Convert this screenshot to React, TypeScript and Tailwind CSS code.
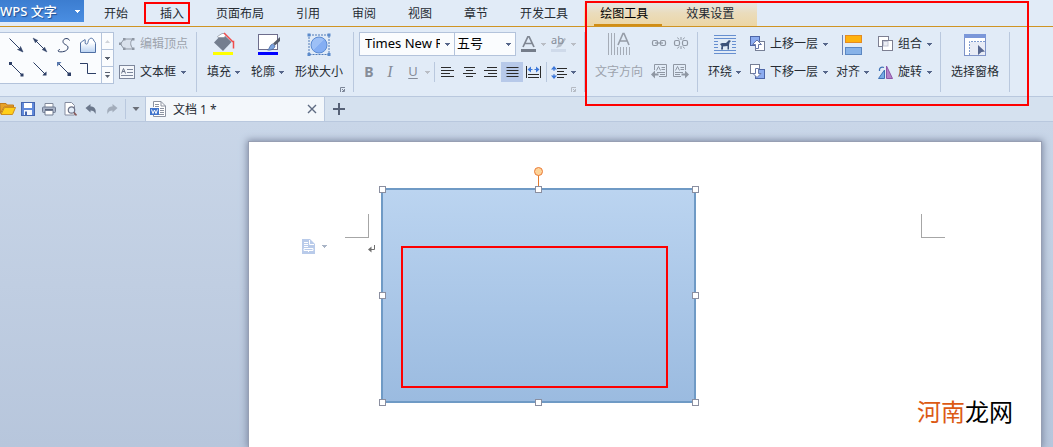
import React, { ReactNode } from "react";

function Caret({ className = "text-[#56668a]" }: { className?: string }) {
  return (
    <svg width="5" height="3" viewBox="0 0 5 3" shapeRendering="crispEdges" className={`shrink-0 ${className}`} aria-hidden="true">
      <path d="M0 0H5V1H0ZM1 1H4V2H1ZM2 2H3V3H2Z" fill="currentColor" />
    </svg>
  );
}

function Icon({ w = 16, h = 16, children }: { w?: number; h?: number; children: ReactNode }) {
  return (
    <svg width={w} height={h} viewBox={`0 0 ${w} ${h}`} fill="none" className="shrink-0" aria-hidden="true">
      {children}
    </svg>
  );
}

function BigButton({ icon, label, caret, disabled }: { icon: ReactNode; label: string; caret?: boolean; disabled?: boolean }) {
  return (
    <button
      type="button"
      disabled={disabled}
      className="flex shrink-0 flex-col items-center gap-1 whitespace-nowrap disabled:text-[#9da3ad]"
    >
      <span className="flex h-6 items-end">{icon}</span>
      <span className="flex h-6 items-center gap-1">
        {label}
        {caret && <Caret />}
      </span>
    </button>
  );
}

function RowButton({ icon, label, caret, disabled }: { icon: ReactNode; label: string; caret?: boolean; disabled?: boolean }) {
  return (
    <button
      type="button"
      disabled={disabled}
      className="flex h-6 items-center gap-[5px] whitespace-nowrap disabled:text-[#9da3ad]"
    >
      {icon}
      {label}
      {caret && <Caret />}
    </button>
  );
}

function IconButton({ label, className = "w-4", disabled, children }: { label: string; className?: string; disabled?: boolean; children: ReactNode }) {
  return (
    <button type="button" aria-label={label} disabled={disabled} className={`flex shrink-0 items-center justify-center ${className}`}>
      {children}
    </button>
  );
}

function Launcher({ className }: { className: string }) {
  return (
    <button type="button" aria-label="更多选项" className={`absolute right-2 bottom-0 ${className}`}>
      <Icon w={5} h={5}>
        <path d="M0.500 5V0.500H5M2 2L4 4M4.500 2V4.500H2" stroke="currentColor" />
      </Icon>
    </button>
  );
}

function Group({ className = "", children }: { className?: string; children: ReactNode }) {
  return <div className={`relative flex h-15 shrink-0 items-start border-r border-[#b9c8de] ${className}`}>{children}</div>;
}

const navy = "#2d3f66";

const shapes: { label: string; art: ReactNode }[] = [
  {
    label: "箭头",
    art: (
      <>
        <path d="M1.500 1.500L13 13" stroke={navy} />
        <path d="M15 15L9.500 12.500L12 12L12.500 9.500Z" fill={navy} stroke={navy} strokeWidth="0.600" />
      </>
    ),
  },
  {
    label: "双箭头",
    art: (
      <>
        <path d="M3 3L13 13" stroke={navy} />
        <path d="M15 15L10 12.500L12 12L12.500 10ZM1 1L6 3.500L4 4L3.500 6Z" fill={navy} stroke={navy} strokeWidth="0.400" />
      </>
    ),
  },
  { label: "曲线", art: <path d="M13.500 3.500C12.500 0.500 7 1 7 4.500C7 8 12.500 7.500 12 11C11.500 14.500 5 15.500 2.500 14.500C1.500 13.500 3 12.500 4 12.500" stroke={navy} /> },
  {
    label: "任意多边形",
    art: (
      <>
        <defs>
          <linearGradient id="freeform" x1="0" y1="0" x2="0" y2="1">
            <stop offset="0.300" stopColor="#ffffff" />
            <stop offset="1" stopColor="#b9d2f2" />
          </linearGradient>
        </defs>
        <path
          d="M0.500 6C1.500 4 4 4 5 2.500C6 4 4 6.500 6 7C8.500 7.500 7.500 4.500 9 2.500C10.500 0.500 13 1 13.500 3C14 4.500 15.500 5 15.500 6.500V15.500H0.500Z"
          fill="url(#freeform)"
          stroke="#4f6fa3"
        />
      </>
    ),
  },
  {
    label: "肘形连接",
    art: (
      <>
        <path d="M3 3L14 14" stroke={navy} />
        <path d="M1 1H4V4H1ZM12.500 12.500H15.500V15.500H12.500Z" fill={navy} />
      </>
    ),
  },
  {
    label: "直线连接",
    art: (
      <>
        <path d="M1.500 1.500L13 13" stroke={navy} />
        <path d="M11.500 13L14.500 10.500V14.500H10.500Z" fill={navy} />
      </>
    ),
  },
  {
    label: "双向连接",
    art: (
      <>
        <path d="M3 3L13 13" stroke={navy} />
        <path d="M11.500 11.500H15V15H11.500Z" fill={navy} />
        <path d="M1 1H5.500L1 5.500Z" fill="#5878ae" />
      </>
    ),
  },
  { label: "折线", art: <path d="M0 2.500H7.500V12.500H16" stroke={navy} /> },
];

function ShapeGallery() {
  return (
    <div className="flex shrink-0 border-y border-r border-[#b3c3db] bg-[#fafcfe]">
      <div className="grid grid-cols-4 pr-px pb-0.5 pl-1">
        {shapes.map((s) => (
          <button key={s.label} type="button" aria-label={s.label} className="flex size-6 items-center justify-center">
            <Icon>{s.art}</Icon>
          </button>
        ))}
      </div>
      <div className="flex w-3 flex-col divide-y divide-[#b3c3db] border-l border-[#b3c3db]">
        <button type="button" aria-label="向上" className="flex flex-1 items-center justify-center">
          <Icon w={5} h={3}>
            <path d="M0 3H5L2.500 0Z" fill="#cfd3d9" />
          </Icon>
        </button>
        <button type="button" aria-label="向下" className="flex flex-1 items-center justify-center">
          <Caret className="text-[#5a6270]" />
        </button>
        <button type="button" aria-label="展开" className="flex flex-1 items-center justify-center">
          <Icon w={5} h={6}>
            <path d="M0 0H5V1H0ZM0 3H5L2.500 6Z" fill="#5a6270" />
          </Icon>
        </button>
      </div>
    </div>
  );
}

const gray = "#8f97a3";

const editPoints = (
  <Icon w={16} h={14}>
    <path d="M5 2H13.500C11 5 11 8 14 12H5L1.500 7Z" stroke={gray} fill="#d9e1ec" />
    <path d="M4 1H6.500V3.500H4ZM13 1H15.500V3.500H13ZM4 10.500H6.500V13H4ZM13 10.500H15.500V13H13ZM0 5.500H2.500V8H0Z" fill={gray} />
  </Icon>
);

const textBox = (
  <Icon w={16} h={14}>
    <rect x="0.500" y="0.500" width="15" height="13" fill="#f4f7fb" stroke="#7d879c" />
    <path d="M2.500 8.500L4.500 3.500L6.500 8.500M3 6.500H6" stroke="#6a7488" />
    <path d="M8 4.500H14M8 7.500H14M2 10.500H14" stroke="#7d879c" />
  </Icon>
);

const fillIcon = (
  <Icon w={24} h={24}>
    <path d="M10.500 1.500L19.500 10L11 19L2 10.500Z" fill="#747e8f" />
    <path d="M5.500 4.500L10 1.500H13L14 3.500L12 5.500H6Z" fill="#fff" stroke="#8a92a0" strokeWidth="0.700" />
    <path d="M12 1L20.500 9.500H21.500V16.500" stroke="#f04c4c" strokeWidth="1.500" />
    <rect x="1" y="20" width="20" height="3" fill="#ffff00" />
  </Icon>
);

const outlineIcon = (
  <Icon w={24} h={24}>
    <rect x="2.500" y="2.500" width="19" height="15" fill="#fff" stroke="#6d6d8c" />
    <path d="M24 5V9L19 13.500L17 11.500Z" fill="#565d6c" />
    <path d="M16.500 12L19 14C18.500 17 15 18.500 11.500 18C14 16.500 13.500 13 16.500 12Z" fill="#7ba4e0" stroke="#3f5c96" strokeWidth="0.700" />
    <rect x="2" y="20" width="20" height="3" fill="#0000ff" />
  </Icon>
);

const sizeIcon = (
  <Icon w={24} h={23}>
    <defs>
      <linearGradient id="disc" x1="0" y1="0" x2="1" y2="1">
        <stop offset="0.500" stopColor="#9dc0f6" />
        <stop offset="0.500" stopColor="#84aef3" />
      </linearGradient>
    </defs>
    <rect x="2" y="2" width="20" height="19.500" stroke="#4f7ab8" strokeDasharray="2 1" />
    <circle cx="12" cy="12" r="8" fill="url(#disc)" stroke="#5a8ad2" />
    <path d="M0.500 0.500H3.500V3.500H0.500ZM20.500 0.500H23.500V3.500H20.500ZM0.500 20H3.500V23H0.500ZM20.500 20H23.500V23H20.500Z" fill="#5a8acb" />
  </Icon>
);

const directionIcon = (
  <Icon w={24} h={24}>
    <path d="M1.500 1V23M4.500 1V23M7.500 1V23M10.500 15V23M13.500 15V23M16.500 15V23M19.500 15V23M22.500 15V23" stroke="#a5acb7" />
    <path d="M11 13L16 1.500H17L22 13M13 9H20" stroke="#959ca7" strokeWidth="1.600" />
  </Icon>
);

const wrapIcon = (
  <Icon w={22} h={22}>
    <path d="M0 1.500H22M0 4.500H22M0 7.500H4M0 10.500H4M0 13.500H4M18 7.500H22M18 10.500H22M18 13.500H22M0 16.500H22M0 19.500H22" stroke="#668fd0" />
    <path d="M5 6H17V16H5Z" fill="#e1ebf7" />
    <path d="M6 10L8 9H12L15 6L17 7L15.500 8.500L15 11V15.500H13.500V12L9 12.500V15.500H7L7.500 12Z" fill="#3d5279" />
  </Icon>
);

const bringForward = (
  <Icon>
    <rect x="1.500" y="0.500" width="9" height="9" fill="#8cacf0" stroke="#4d66a8" />
    <rect x="6.500" y="5.500" width="9" height="9" fill="#fff" stroke="#767f96" />
    <path d="M8 4L3.500 8.500H6.500V12.500H9.500V8.500H12.500Z" fill="#fff" stroke="#6878a8" />
  </Icon>
);

const sendBackward = (
  <Icon>
    <rect x="1.500" y="0.500" width="9" height="9" fill="#fff" stroke="#767f96" />
    <rect x="6.500" y="5.500" width="9" height="9" fill="#8cacf0" stroke="#4d66a8" />
    <path d="M6.500 4.500H9.500V9.500H12L8 13.500L4 9.500H6.500Z" fill="#fff" stroke="#6878a8" />
  </Icon>
);

const alignIcon = (
  <Icon w={21} h={22}>
    <path d="M0.500 1V21" stroke="#6c83b4" />
    <rect x="3.500" y="1.500" width="16" height="7" fill="#ffb20d" stroke="#e48b22" />
    <rect x="3.500" y="13.500" width="16" height="7" fill="#87b2e8" stroke="#5b87c2" />
  </Icon>
);

const groupIcon = (
  <Icon>
    <rect x="1.500" y="0.500" width="10" height="10" fill="#fff" stroke="#7d7f92" />
    <rect x="5.500" y="4.500" width="10" height="10" fill="#fff" stroke="#7d7f92" />
    <rect x="6.500" y="5.500" width="4.500" height="4.500" fill="#eceef4" stroke="#c2c6d4" />
  </Icon>
);

const rotateIcon = (
  <Icon>
    <path d="M7.500 6L1.500 14.500H7.500Z" fill="#76a9e6" stroke="#3f72b5" />
    <path d="M9.500 2V14.500H15.500Z" fill="#b381c8" stroke="#8c55a8" />
    <path d="M2.500 7C2 4 4 2.500 7 3.500" stroke="#3f72b5" strokeWidth="1.300" />
  </Icon>
);

const paneIcon = (
  <Icon w={24} h={23}>
    <rect x="1.500" y="1.500" width="21" height="21" fill="#fff" stroke="#7e93c8" />
    <rect x="1" y="1" width="22" height="4" fill="#7b97d9" />
    <path d="M7 9H22V22H7Z" fill="#e8ecf6" />
    <path d="M6.500 22V8.500H22" stroke="#7f9cd0" strokeDasharray="2 1" />
    <path d="M15 12L22 18.500L18.500 19L15 22Z" fill="#56668f" />
  </Icon>
);

const tabs = ["开始", "插入", "页面布局", "引用", "审阅", "视图", "章节", "开发工具"];

function MenuTabs() {
  return (
    <nav className="flex h-[27px] items-start border-b border-[#cf9424] whitespace-nowrap">
      <button
        type="button"
        className="flex h-[22px] w-[84px] shrink-0 items-center justify-between bg-linear-to-b from-[#3c7dd0] to-[#4a8ee2] pr-1 text-[13px] leading-5 font-medium text-white [text-shadow:1px_1px_1px_#1f4f93]"
      >
        WPS 文字
        <Caret className="text-white" />
      </button>
      <div className="flex h-[26px] pl-1">
        {tabs.map((t) => (
          <button key={t} type="button" className="relative h-full px-4 pt-0.5">
            {t}
            {t === "插入" && <span className="absolute top-0.5 left-0 h-[22px] w-[46px] border-2 border-[#fe0000]" />}
          </button>
        ))}
      </div>
      <div className="flex h-[26px] w-[173px] shrink-0 bg-linear-to-b from-[#e5e9ee] via-[#eadcbc] to-[#ecd6a5] pl-2.5">
        <button type="button" className="h-full w-[68px] border-b-2 border-[#d18d14] pt-1 pl-1.5 text-left text-black">
          绘图工具
        </button>
        <button type="button" className="h-full pt-0.5 pl-6">
          效果设置
        </button>
      </div>
    </nav>
  );
}

function Combo({ label, value, className }: { label: string; value: string; className: string }) {
  return (
    <div className={`relative flex h-6 items-center border border-[#b3c3db] bg-[#fafcfe] ${className}`}>
      <select
        aria-label={label}
        defaultValue={value}
        className="h-full w-full appearance-none overflow-hidden bg-transparent pr-3.5 text-[13px] text-black outline-none"
      >
        <option>{value}</option>
      </select>
      <span className="pointer-events-none absolute right-1">
        <Caret />
      </span>
    </div>
  );
}

function AlignLines({ d }: { d: string }) {
  return (
    <Icon w={13} h={12}>
      <path d={d} stroke="#2b2b2b" />
    </Icon>
  );
}

function FontGroup() {
  return (
    <Group className="w-[231px] pl-[5px]">
      <div className="flex flex-col gap-1">
        <div className="flex h-6 items-center">
          <Combo label="字体" value="Times New Roman" className="w-24 pl-[5px]" />
          <Combo label="字号" value="五号" className="-ml-px w-[62px] pl-0.5" />
          <div className="flex items-center gap-[5px] pl-[5px]">
            <IconButton label="字体颜色" className="w-[15px]" disabled>
              <Icon w={15} h={16}>
                <path d="M2 11L7 0.500H8L13 11M4 7.500H11" stroke="#7f8692" strokeWidth="1.700" />
                <path d="M0 13H15V16H0Z" fill="#757d8a" />
              </Icon>
            </IconButton>
            <Caret className="text-[#b9bdc5]" />
            <IconButton label="突出显示" className="relative w-[15px]" disabled>
              <Icon w={15} h={16}>
                <path d="M13.500 2L15 3L10 10.500L5 12L7 8.500Z" fill="#b4bcc8" />
                <path d="M0 13H15V16H0Z" fill="#cfdaea" />
              </Icon>
              <span className="absolute -top-1 left-0 text-[11px] leading-4 text-[#858c98]">ab</span>
            </IconButton>
            <Caret className="text-[#b9bdc5]" />
          </div>
        </div>
        <div className="flex h-6 items-center text-[#868d99]">
          <IconButton label="加粗" className="w-5" disabled>
            <b className="text-sm">B</b>
          </IconButton>
          <IconButton label="倾斜" className="w-[22px]" disabled>
            <i className="font-['Liberation_Serif',serif] text-base">I</i>
          </IconButton>
          <IconButton label="下划线" className="w-6" disabled>
            <span className="text-[13px] underline underline-offset-2">U</span>
          </IconButton>
          <Caret className="text-[#b9bdc5]" />
          <span className="mr-px ml-1 h-5 w-px bg-[#b9c8de]" />
          <IconButton label="左对齐" className="w-[22px]">
            <AlignLines d="M0 1.500H10M0 4.500H13M0 7.500H9M0 10.500H13" />
          </IconButton>
          <IconButton label="居中" className="w-[22px]">
            <AlignLines d="M1 1.500H12M3 4.500H10M0 7.500H13M3 10.500H10" />
          </IconButton>
          <IconButton label="右对齐" className="w-[21px]">
            <AlignLines d="M3 1.500H13M0 4.500H13M4 7.500H13M0 10.500H13" />
          </IconButton>
          <IconButton label="两端对齐" className="h-5 w-[22px] bg-[#b7c9e9]">
            <AlignLines d="M0.500 1.500H12.500M0.500 4.500H12.500M0.500 7.500H12.500M0.500 10.500H12.500" />
          </IconButton>
          <IconButton label="分散对齐" className="w-[21px]">
            <Icon w={15} h={12}>
              <path d="M0.500 0V12M14.500 0V12M2 8.500H13M2 11.500H13" stroke="#2b2b2b" />
              <path d="M1.500 3.500L5 0.500V3H6.500V4H5V6.500ZM13.500 3.500L10 0.500V3H8.500V4H10V6.500Z" fill="#3b76d8" />
            </Icon>
          </IconButton>
          <span className="ml-0.5 h-5 w-px bg-[#b9c8de]" />
          <button type="button" aria-label="行距" className="flex items-center gap-1 pl-1">
            <Icon w={16} h={13}>
              <path d="M6 2.500H16M6 5.500H13M6 8.500H16M6 11.500H13" stroke="#2b2b2b" />
              <path d="M3 0L6 3.500H3.500V5H2.500V3.500H0ZM3 13L6 9.500H3.500V8H2.500V9.500H0Z" fill="#3b76d8" />
            </Icon>
            <Caret />
          </button>
        </div>
      </div>
      <Launcher className="text-[#b5bac3]" />
    </Group>
  );
}

function LinkButtons() {
  return (
    <div className="grid grid-cols-2 gap-x-1.5 gap-y-1">
      <IconButton label="创建链接" className="h-6 w-4" disabled>
        <Icon>
          <rect x="1.500" y="4.500" width="5" height="5" rx="1.500" stroke={gray} strokeWidth="1.200" />
          <rect x="9.500" y="4.500" width="5" height="5" rx="1.500" stroke={gray} strokeWidth="1.200" />
          <path d="M4 7H12" stroke={gray} strokeWidth="1.200" />
        </Icon>
      </IconButton>
      <IconButton label="断开链接" className="h-6 w-4" disabled>
        <Icon>
          <rect x="1.500" y="4.500" width="5" height="5" rx="1.500" stroke={gray} strokeWidth="1.200" />
          <rect x="9.500" y="4.500" width="5" height="5" rx="1.500" stroke={gray} strokeWidth="1.200" />
          <path d="M8 1V4M4.500 1.500L6 3.500M11.500 1.500L10 3.500M8 10V13M4.500 12.500L6 10.500M11.500 12.500L10 10.500" stroke={gray} />
        </Icon>
      </IconButton>
      <IconButton label="上一文本框" className="h-6 w-4" disabled>
        <Icon>
          <path d="M3.500 6V0.500H15.500V12.500H8" stroke={gray} />
          <path d="M5.500 6.500L7.500 2.500L9.500 6.500M10.500 3.500H14M10.500 5.500H14M6 8.500H14M9 10.500H14" stroke={gray} />
          <path d="M0 10.500L4 6.500V9.500H7.500V11.500H4V14.500Z" fill={gray} />
        </Icon>
      </IconButton>
      <IconButton label="下一文本框" className="h-6 w-4" disabled>
        <Icon>
          <path d="M12.500 6V0.500H0.500V12.500H8" stroke={gray} />
          <path d="M2.500 6.500L4.500 2.500L6.500 6.500M7.500 3.500H11M7.500 5.500H11M2 8.500H10M2 10.500H7" stroke={gray} />
          <path d="M16 10.500L12 6.500V9.500H8.500V11.500H12V14.500Z" fill={gray} />
        </Icon>
      </IconButton>
    </div>
  );
}

function Ribbon() {
  return (
    <div className="flex h-[70px] items-start overflow-hidden border-b border-[#b9c8de] pt-[5px]">
      <Group className="w-[197px] gap-[5px]">
        <ShapeGallery />
        <div className="flex flex-col gap-1">
          <RowButton icon={editPoints} label="编辑顶点" disabled />
          <RowButton icon={textBox} label="文本框" caret />
        </div>
      </Group>
      <Group className="w-[157px] gap-[11px] pl-2.5">
        <BigButton icon={fillIcon} label="填充" caret />
        <BigButton icon={outlineIcon} label="轮廓" caret />
        <BigButton icon={sizeIcon} label="形状大小" />
        <Launcher className="text-[#7c8698]" />
      </Group>
      <FontGroup />
      <Group className="w-[113px] gap-2 pl-2.5">
        <BigButton icon={directionIcon} label="文字方向" disabled />
        <LinkButtons />
      </Group>
      <Group className="w-[243px] gap-2 pl-2.5">
        <BigButton icon={wrapIcon} label="环绕" caret />
        <div className="flex flex-col gap-1">
          <RowButton icon={bringForward} label="上移一层" caret />
          <RowButton icon={sendBackward} label="下移一层" caret />
        </div>
        <BigButton icon={alignIcon} label="对齐" caret />
        <div className="flex flex-col gap-1">
          <RowButton icon={groupIcon} label="组合" caret />
          <RowButton icon={rotateIcon} label="旋转" caret />
        </div>
      </Group>
      <Group className="w-[69px] pl-2.5">
        <BigButton icon={paneIcon} label="选择窗格" />
      </Group>
    </div>
  );
}

function DocumentBar() {
  return (
    <div className="flex h-[25px] items-stretch border-b border-[#b9c8de] bg-[#d5e1ef]">
      <IconButton label="打开" className="w-[15px]">
        <Icon>
          <path d="M0 2.500H6L7 4H13.500V6H4L0.500 12.500Z" fill="#e7a228" stroke="#c47d1a" />
          <path d="M4.500 6.500H15.500L12.500 13.500H1Z" fill="#ffcf1a" stroke="#cf8f1c" />
        </Icon>
      </IconButton>
      <IconButton label="保存" className="w-[26px]">
        <Icon w={14} h={14}>
          <rect x="0.500" y="0.500" width="13" height="13" fill="#6089da" stroke="#4566b0" />
          <rect x="3" y="1" width="8" height="5" fill="#fff" />
          <rect x="3" y="8" width="8" height="5" fill="#f3f6fc" />
          <rect x="4" y="9.500" width="2" height="3.500" fill="#4566b0" />
        </Icon>
      </IconButton>
      <IconButton label="打印" className="w-4">
        <Icon w={14} h={14}>
          <path d="M3 5V1.500H11V5" fill="#fff" stroke="#80899b" />
          <rect x="0.500" y="5" width="13" height="5.500" rx="1" fill="#a9b4c8" stroke="#717c92" />
          <path d="M3 8.500H11V13H3Z" fill="#fff" stroke="#717c92" />
          <path d="M3 7.500H11" stroke="#59647c" />
        </Icon>
      </IconButton>
      <IconButton label="打印预览" className="w-[26px]">
        <Icon w={13} h={14}>
          <path d="M1 0.500H7.500L10.500 3.500V13H1Z" fill="#fff" stroke="#858ca0" />
          <circle cx="7.500" cy="8" r="3.200" fill="#e3edf9" stroke="#6d7389" strokeWidth="1.200" />
          <path d="M10 10.500L12.500 13.500" stroke="#8a5c5c" strokeWidth="1.600" />
        </Icon>
      </IconButton>
      <IconButton label="撤销" className="w-4">
        <Icon w={12} h={12}>
          <path d="M0.500 5L5.500 1V3.500C9.500 3.500 11.500 6 10.500 11C9.500 8.500 8 7.500 5.500 7.500V9.500Z" fill="#6b778b" />
        </Icon>
      </IconButton>
      <IconButton label="恢复" className="w-[26px]">
        <Icon w={12} h={12}>
          <path d="M11.500 5L6.500 1V3.500C2.500 3.500 0.500 6 1.500 11C2.500 8.500 4 7.500 6.500 7.500V9.500Z" fill="#a3adbb" />
        </Icon>
      </IconButton>
      <span className="my-0.5 w-px bg-[#b9c8de]" />
      <IconButton label="自定义" className="w-[19px]">
        <Icon w={8} h={4}>
          <path d="M0.500 0H7.500L4 4Z" fill="#6b6f78" />
        </Icon>
      </IconButton>
      <div className="flex w-[180px] shrink-0 items-center border-x border-[#b9c8de] bg-[#f3f7fb] pr-1 pl-1">
        <Icon w={16} h={16}>
          <path d="M3.500 6V0.500H11L15.500 5V15.500H3.500V14" fill="#fff" stroke="#8c93a1" />
          <path d="M11 0.500V5H15.500M5 3.500H9M5 5.500H9M10 7.500H14M10 9.500H14M10 11.500H14M5 13.500H14" stroke="#8c93a1" />
          <rect x="0" y="7" width="9" height="7" fill="#3f74cc" />
          <path d="M1.500 8.500L3 12.500L4.500 9L6 12.500L7.500 8.500" stroke="#fff" />
        </Icon>
        <a href="#document" className="flex-1 pt-0.5 pl-[7px] leading-5">
          文档 1 *
        </a>
        <IconButton label="关闭文档">
          <Icon w={10} h={10}>
            <path d="M1 1L9 9M9 1L1 9" stroke="#5e6b82" strokeWidth="1.400" />
          </Icon>
        </IconButton>
      </div>
      <IconButton label="新建文档" className="w-7">
        <Icon w={12} h={12}>
          <path d="M6 0V12M0 6H12" stroke="#566176" strokeWidth="2" />
        </Icon>
      </IconButton>
    </div>
  );
}

const handles = [
  "-left-1 -top-1",
  "left-[152px] -top-1",
  "-right-[5px] -top-1",
  "-left-1 top-[102px]",
  "-right-[5px] top-[102px]",
  "-left-1 -bottom-[5px]",
  "left-[152px] -bottom-[5px]",
  "-right-[5px] -bottom-[5px]",
];

function Workspace() {
  return (
    <main id="document" className="flex flex-1 items-stretch bg-linear-to-b from-[#c9d6e8] to-[#b7c6dc] pt-[19px] pr-[11px] pl-62">
      <article className="relative min-h-[306px] flex-1 border border-b-0 border-[#979fb3] bg-white shadow-[0_0_7px_1px_#7f8ba3]">
        <span className="absolute top-18 left-24 size-6 border-r border-b border-[#a6a6a6]" />
        <span className="absolute top-18 right-24 size-6 border-b border-l border-[#a6a6a6]" />
        <button type="button" aria-label="粘贴选项" className="absolute top-[97px] left-[53px] flex items-center gap-[7px]">
          <Icon w={13} h={15}>
            <path d="M0 0H8L13 5V15H0Z" fill="#b9cbea" />
            <path d="M7.500 1V5.500H12M2 3.500H6M2 5.500H6M2 7.500H6M2 9.500H11V11.500H2ZM6.500 11V13" stroke="#fff" />
          </Icon>
          <Caret className="text-[#a9b4c6]" />
        </button>
        <span className="absolute top-[103px] left-[119px]">
          <Icon w={8} h={8}>
            <path d="M6.500 0V4.500H2" stroke="#6e6e6e" />
            <path d="M0 4.500L3.500 1.500V7.500Z" fill="#6e6e6e" />
          </Icon>
        </span>
        <div className="absolute top-[46px] left-[132px] h-[215px] w-[315px] border-2 border-[#6f9ac5] bg-linear-to-b from-[#bbd4f0] to-[#9bbbe0]">
          <span className="absolute -top-[23px] left-[151px]">
            <Icon w={9} h={21}>
              <path d="M4.500 8V21" stroke="#e27a2e" />
              <circle cx="4.500" cy="4.500" r="4" fill="#fdd49a" stroke="#ea7a38" />
            </Icon>
          </span>
          <span className="absolute top-14 left-[18px] h-[142px] w-[267px] border-2 border-[#fe0000]" />
          {handles.map((pos) => (
            <span key={pos} className={`absolute size-[7px] border border-[#8b8fa0] bg-white ${pos}`} />
          ))}
        </div>
        <p className="absolute top-[254px] right-7 text-2xl whitespace-nowrap text-black">
          <span className="text-[#dc5a14]">河南</span>龙网
        </p>
      </article>
    </main>
  );
}

export default function App() {
  return (
    <div className="flex min-h-screen flex-col overflow-x-hidden bg-[#e1ebf7] font-['Noto_Sans','Noto_Sans_CJK_SC',sans-serif] text-xs text-[#262b33]">
      <header className="relative">
        <MenuTabs />
        <Ribbon />
        <DocumentBar />
        <span className="pointer-events-none absolute top-px left-[585px] h-[105px] w-[444px] border-2 border-[#fe0000]" />
      </header>
      <Workspace />
    </div>
  );
}
